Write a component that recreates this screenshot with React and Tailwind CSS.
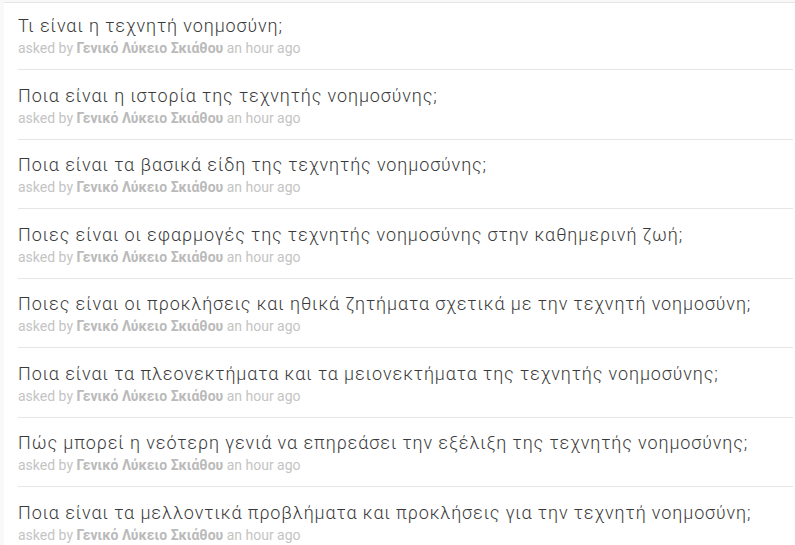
const questions = [
  "Τι είναι η τεχνητή νοημοσύνη;",
  "Ποια είναι η ιστορία της τεχνητής νοημοσύνης;",
  "Ποια είναι τα βασικά είδη της τεχνητής νοημοσύνης;",
  "Ποιες είναι οι εφαρμογές της τεχνητής νοημοσύνης στην καθημερινή ζωή;",
  "Ποιες είναι οι προκλήσεις και ηθικά ζητήματα σχετικά με την τεχνητή νοημοσύνη;",
  "Ποια είναι τα πλεονεκτήματα και τα μειονεκτήματα της τεχνητής νοημοσύνης;",
  "Πώς μπορεί η νεότερη γενιά να επηρεάσει την εξέλιξη της τεχνητής νοημοσύνης;",
  "Ποια είναι τα μελλοντικά προβλήματα και προκλήσεις για την τεχνητή νοημοσύνη;",
];

function QuestionRow({ title, first, last }) {
  return (
    <li
      className={`${first ? "pt-[11px]" : "pt-[13.5px]"} pb-[11px] ${
        last ? "" : "border-b border-[#e6e6e6]"
      }`}
    >
      <h3 className="text-[18px] leading-[24px] font-light tracking-[0.05em] text-[#3a3a3a]">{title}</h3>
      <p className="text-[14px] leading-[20px] text-[#c4c4c4]">
        asked by <span className="font-bold text-[#bababa]">Γενικό Λύκειο Σκιάθου</span> an hour ago
      </p>
    </li>
  );
}

export default function App() {
  return (
    <div className="min-h-[545px] bg-[#f8f8f8] pl-[4px] pt-[2px] font-['Roboto',sans-serif]">
      <div className="min-h-[543px] border-t border-[#e6e6e6] bg-white pl-[14px] pr-[2px]">
        <ul>
          {questions.map((q, i) => (
            <QuestionRow key={i} title={q} first={i === 0} last={i === questions.length - 1} />
          ))}
        </ul>
      </div>
    </div>
  );
}
